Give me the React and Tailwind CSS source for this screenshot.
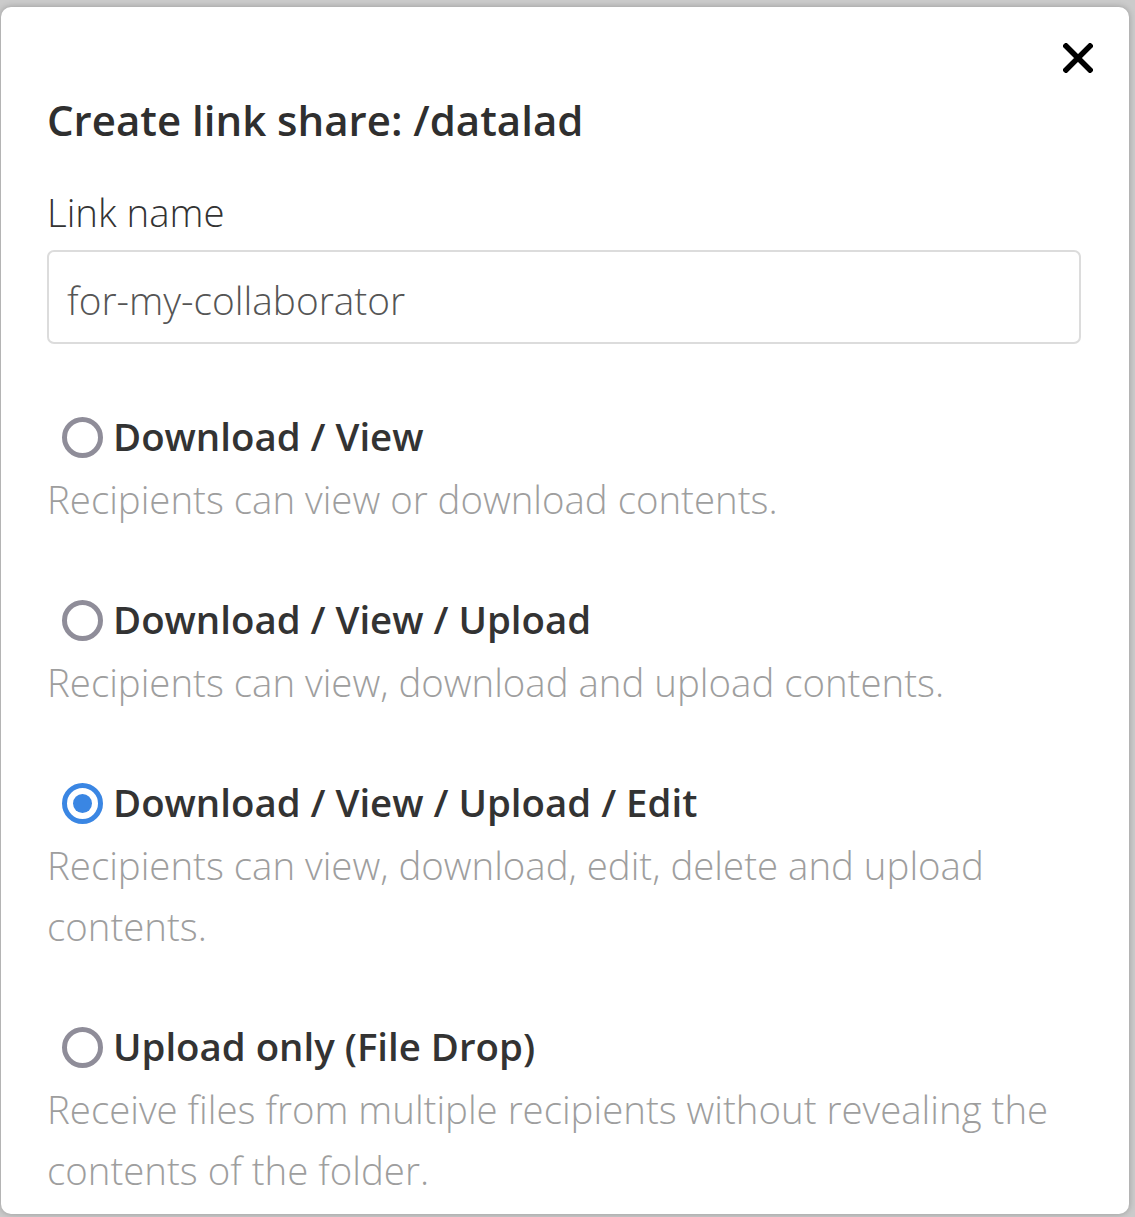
import React from 'react';

const options = [
  {
    id: 'view',
    label: 'Download / View',
    desc: 'Recipients can view or download contents.',
  },
  {
    id: 'upload',
    label: 'Download / View / Upload',
    desc: 'Recipients can view, download and upload contents.',
  },
  {
    id: 'edit',
    label: 'Download / View / Upload / Edit',
    desc: 'Recipients can view, download, edit, delete and upload contents.',
  },
  {
    id: 'drop',
    label: 'Upload only (File Drop)',
    desc: 'Receive files from multiple recipients without revealing the contents of the folder.',
  },
];

const Radio = ({ checked }) => (
  <span
    className={
      checked
        ? 'flex items-center justify-center w-[41px] h-[41px] rounded-full border-[5px] border-[#3a86e3] bg-white'
        : 'flex items-center justify-center w-[41px] h-[41px] rounded-full border-[5px] border-[#8f8d99] bg-white'
    }
  >
    {checked && <span className="block w-[19px] h-[19px] rounded-full bg-[#3a86e3]"></span>}
  </span>
);

const App = () => {
  const selected = 'edit';

  return (
    <div className="w-full h-[1217px] bg-[#cbcbcb] pt-[7px] pl-[1px] overflow-hidden font-['Open_Sans',sans-serif]">
      <div className="relative w-[1128px] h-[1207px] bg-white rounded-[10px] shadow-[0_0_6px_rgba(0,0,0,0.25)] pl-[46px] pr-[48px] pt-[89px] overflow-hidden">
        {/* close */}
        <button className="absolute top-[36px] right-[36px] w-[30px] h-[30px]">
          <svg viewBox="0 0 30 30" className="w-[30px] h-[30px]">
            <path d="M3 3 L27 27 M27 3 L3 27" stroke="#000" strokeWidth="5.5" strokeLinecap="square" />
          </svg>
        </button>

        <h2 className="text-[42px] leading-[48px] font-semibold text-[#2f2f2f]">Create link share: /datalad</h2>

        <label className="block mt-[43px] text-[38.4px] leading-[50px] font-light text-[#333]">Link name</label>
        <div className="mt-[13px] h-[94px] border-2 border-[#dcdcdc] rounded-[7px] px-[18px] pt-[6px] flex items-center">
          <span className="text-[38.8px] font-light text-[#555]">for-my-collaborator</span>
        </div>

        <div className="mt-[61px] flex flex-col gap-[58px]">
          {options.map((o) => (
            <div key={o.id}>
              <div className="flex items-center h-[64px] pl-[15px] gap-[10px]">
                <Radio checked={o.id === selected} />
                <span className="text-[38.4px] font-semibold text-[#333]">{o.label}</span>
              </div>
              <p className="text-[38.4px] leading-[61px] font-light text-[#9e9e9e]">{o.desc}</p>
            </div>
          ))}
        </div>
      </div>
    </div>
  );
};

export default App;
